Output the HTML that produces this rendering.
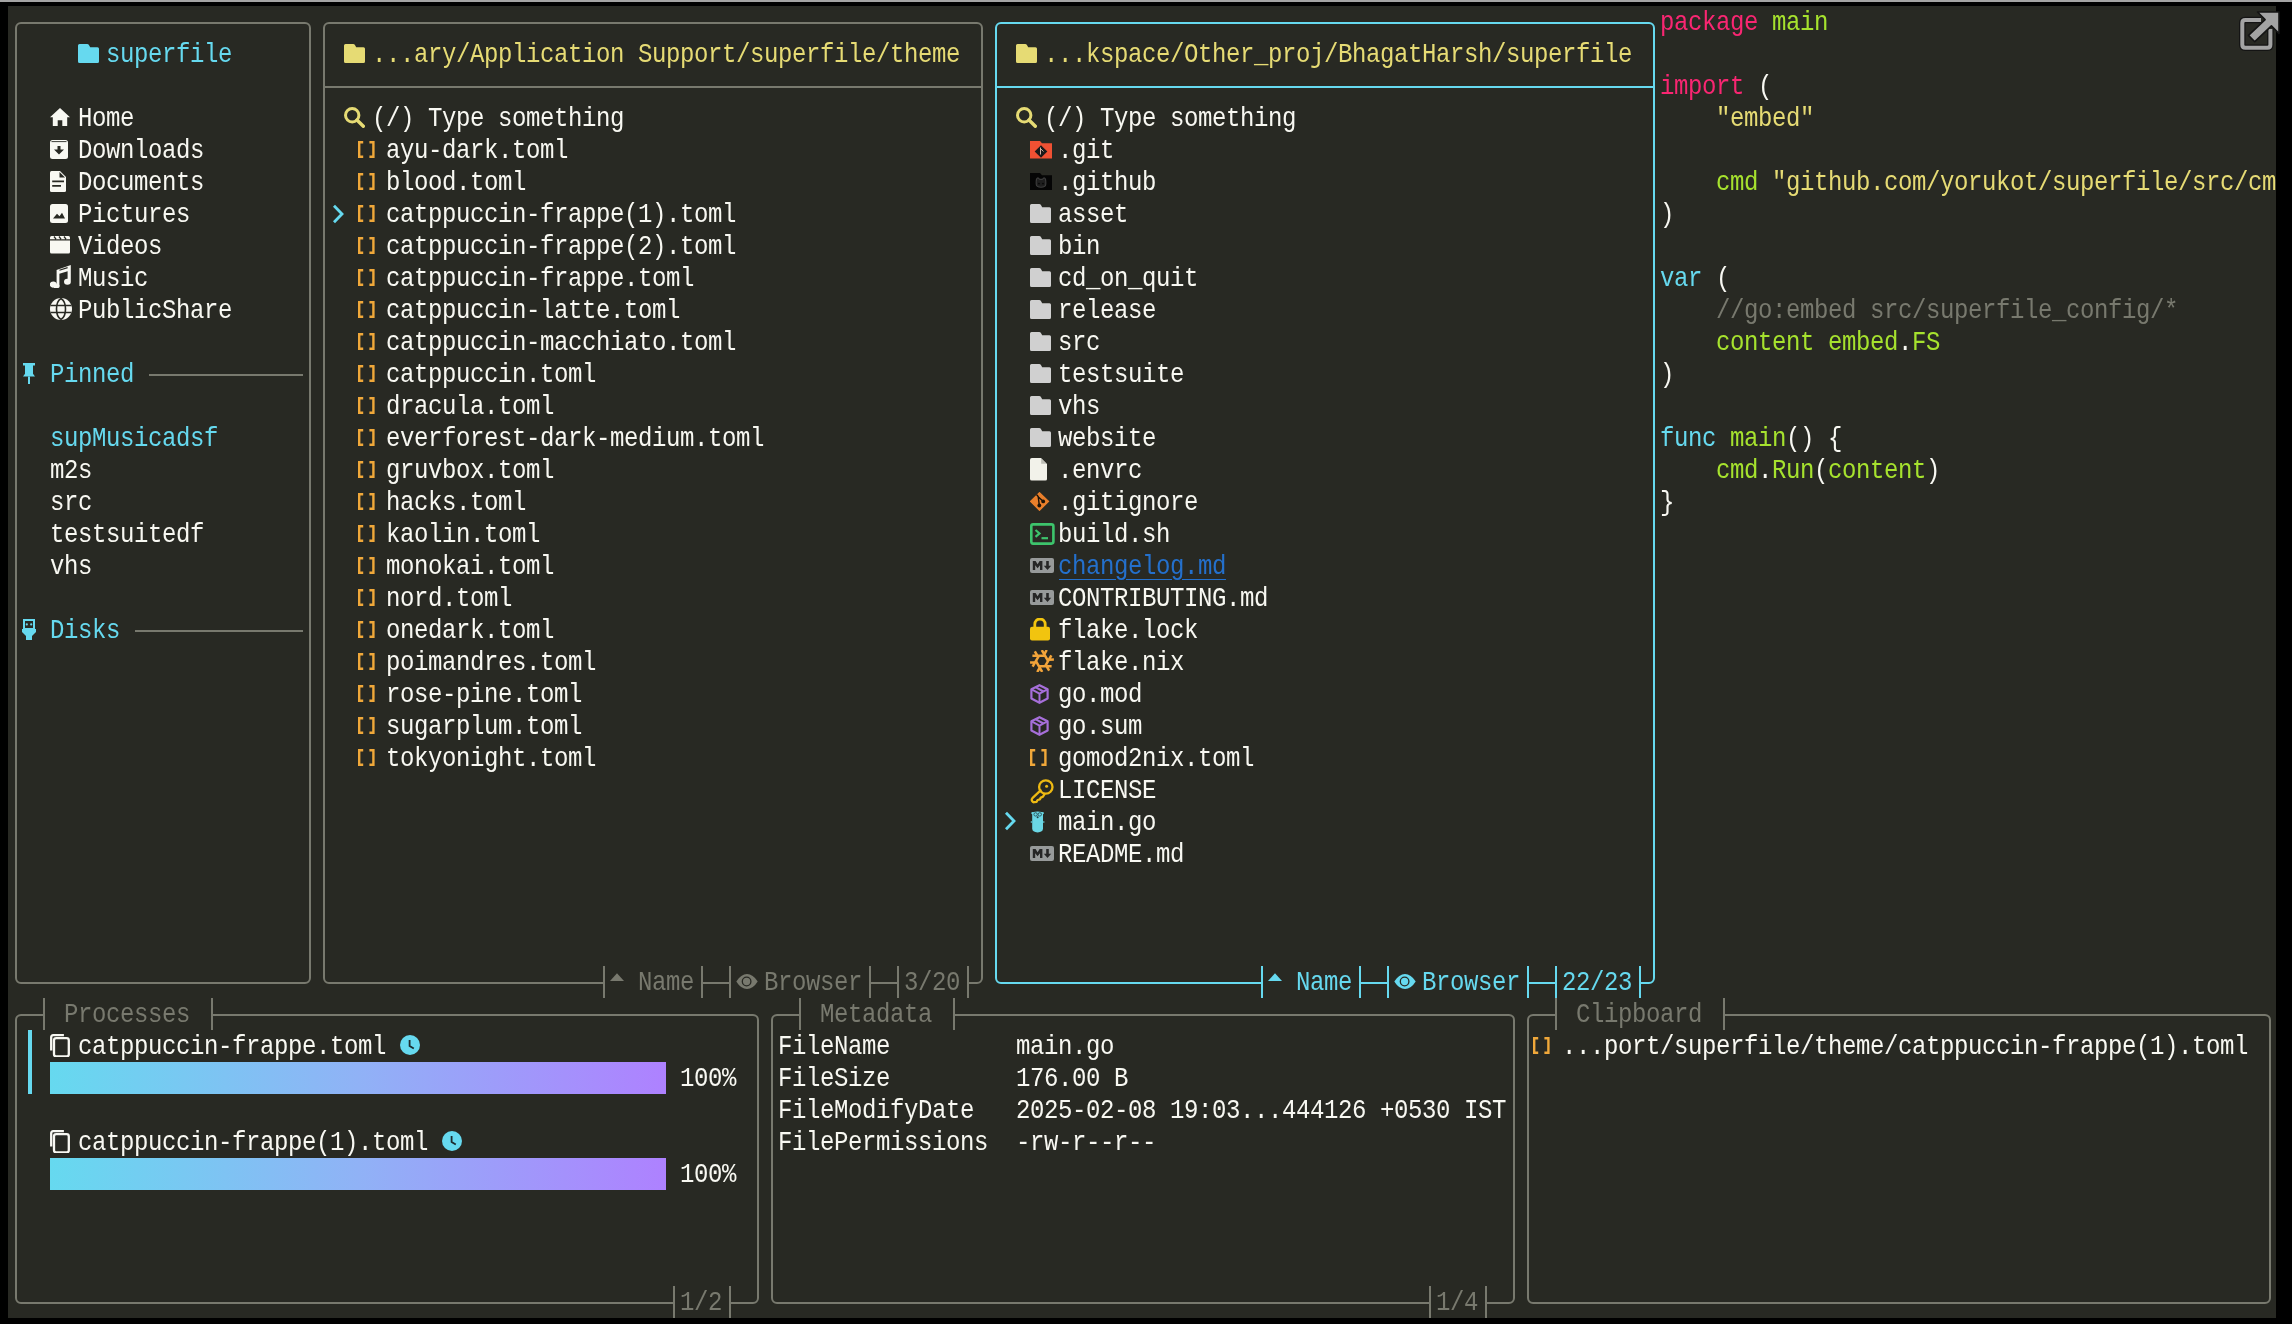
<!DOCTYPE html><html><head><meta charset="utf-8"><style>
html,body{margin:0;padding:0;}
body{width:2292px;height:1324px;background:#000;position:relative;overflow:hidden;}
body>div,body>span,body>svg{position:absolute;}
.t{font-family:"Liberation Mono",monospace;font-size:24px;letter-spacing:-0.400px;line-height:32px;white-space:pre;transform-origin:0 5.17px;transform:scaleY(1.12);will-change:transform;}
</style></head><body>
<div style="left:0px;top:0px;width:2292px;height:2px;background:#a4a4a4;"></div>
<div style="left:8px;top:6px;width:2268px;height:1312px;background:#282923;"></div>
<div style="left:15px;top:22px;width:292px;height:958px;border:2px solid #78796E;border-radius:6px;"></div>
<div style="left:323px;top:22px;width:656px;height:958px;border:2px solid #78796E;border-radius:6px;"></div>
<div style="left:323px;top:86px;width:660px;height:2px;background:#78796E;"></div>
<div style="left:995px;top:22px;width:656px;height:958px;border:2px solid #66D9EF;border-radius:6px;"></div>
<div style="left:995px;top:86px;width:660px;height:2px;background:#66D9EF;"></div>
<div style="left:15px;top:1014px;width:740px;height:286px;border:2px solid #78796E;border-radius:6px;"></div>
<div style="left:771px;top:1014px;width:740px;height:286px;border:2px solid #78796E;border-radius:6px;"></div>
<div style="left:1527px;top:1014px;width:740px;height:286px;border:2px solid #78796E;border-radius:6px;"></div>
<div style="left:45px;top:1013px;width:166px;height:4px;background:#282923;"></div>
<div style="left:43px;top:998px;width:2px;height:32px;background:#78796E;"></div>
<div style="left:37px;top:1014px;width:8px;height:2px;background:#78796E;"></div>
<div style="left:211px;top:998px;width:2px;height:32px;background:#78796E;"></div>
<div style="left:211px;top:1014px;width:8px;height:2px;background:#78796E;"></div>
<span class="t" style="left:64px;top:998px;color:#78796E;">Processes</span>
<div style="left:801px;top:1013px;width:152px;height:4px;background:#282923;"></div>
<div style="left:799px;top:998px;width:2px;height:32px;background:#78796E;"></div>
<div style="left:793px;top:1014px;width:8px;height:2px;background:#78796E;"></div>
<div style="left:953px;top:998px;width:2px;height:32px;background:#78796E;"></div>
<div style="left:953px;top:1014px;width:8px;height:2px;background:#78796E;"></div>
<span class="t" style="left:820px;top:998px;color:#78796E;">Metadata</span>
<div style="left:1557px;top:1013px;width:166px;height:4px;background:#282923;"></div>
<div style="left:1555px;top:998px;width:2px;height:32px;background:#78796E;"></div>
<div style="left:1549px;top:1014px;width:8px;height:2px;background:#78796E;"></div>
<div style="left:1723px;top:998px;width:2px;height:32px;background:#78796E;"></div>
<div style="left:1723px;top:1014px;width:8px;height:2px;background:#78796E;"></div>
<span class="t" style="left:1576px;top:998px;color:#78796E;">Clipboard</span>
<div style="left:675px;top:1301px;width:54px;height:4px;background:#282923;"></div>
<div style="left:673px;top:1286px;width:2px;height:32px;background:#78796E;"></div>
<div style="left:667px;top:1302px;width:8px;height:2px;background:#78796E;"></div>
<div style="left:729px;top:1286px;width:2px;height:32px;background:#78796E;"></div>
<div style="left:729px;top:1302px;width:8px;height:2px;background:#78796E;"></div>
<span class="t" style="left:680px;top:1286px;color:#78796E;">1/2</span>
<div style="left:1431px;top:1301px;width:54px;height:4px;background:#282923;"></div>
<div style="left:1429px;top:1286px;width:2px;height:32px;background:#78796E;"></div>
<div style="left:1423px;top:1302px;width:8px;height:2px;background:#78796E;"></div>
<div style="left:1485px;top:1286px;width:2px;height:32px;background:#78796E;"></div>
<div style="left:1485px;top:1302px;width:8px;height:2px;background:#78796E;"></div>
<span class="t" style="left:1436px;top:1286px;color:#78796E;">1/4</span>
<div style="left:605px;top:981px;width:96px;height:4px;background:#282923;"></div>
<div style="left:603px;top:966px;width:2px;height:32px;background:#78796E;"></div>
<div style="left:597px;top:982px;width:8px;height:2px;background:#78796E;"></div>
<div style="left:701px;top:966px;width:2px;height:32px;background:#78796E;"></div>
<div style="left:701px;top:982px;width:8px;height:2px;background:#78796E;"></div>
<div style="left:731px;top:981px;width:138px;height:4px;background:#282923;"></div>
<div style="left:729px;top:966px;width:2px;height:32px;background:#78796E;"></div>
<div style="left:723px;top:982px;width:8px;height:2px;background:#78796E;"></div>
<div style="left:869px;top:966px;width:2px;height:32px;background:#78796E;"></div>
<div style="left:869px;top:982px;width:8px;height:2px;background:#78796E;"></div>
<div style="left:899px;top:981px;width:68px;height:4px;background:#282923;"></div>
<div style="left:897px;top:966px;width:2px;height:32px;background:#78796E;"></div>
<div style="left:891px;top:982px;width:8px;height:2px;background:#78796E;"></div>
<div style="left:967px;top:966px;width:2px;height:32px;background:#78796E;"></div>
<div style="left:967px;top:982px;width:8px;height:2px;background:#78796E;"></div>
<span class="t" style="left:638px;top:966px;color:#78796E;">Name</span>
<span class="t" style="left:764px;top:966px;color:#78796E;">Browser</span>
<span class="t" style="left:904px;top:966px;color:#78796E;">3/20</span>
<div style="left:1263px;top:981px;width:96px;height:4px;background:#282923;"></div>
<div style="left:1261px;top:966px;width:2px;height:32px;background:#66D9EF;"></div>
<div style="left:1255px;top:982px;width:8px;height:2px;background:#66D9EF;"></div>
<div style="left:1359px;top:966px;width:2px;height:32px;background:#66D9EF;"></div>
<div style="left:1359px;top:982px;width:8px;height:2px;background:#66D9EF;"></div>
<div style="left:1389px;top:981px;width:138px;height:4px;background:#282923;"></div>
<div style="left:1387px;top:966px;width:2px;height:32px;background:#66D9EF;"></div>
<div style="left:1381px;top:982px;width:8px;height:2px;background:#66D9EF;"></div>
<div style="left:1527px;top:966px;width:2px;height:32px;background:#66D9EF;"></div>
<div style="left:1527px;top:982px;width:8px;height:2px;background:#66D9EF;"></div>
<div style="left:1557px;top:981px;width:82px;height:4px;background:#282923;"></div>
<div style="left:1555px;top:966px;width:2px;height:32px;background:#66D9EF;"></div>
<div style="left:1549px;top:982px;width:8px;height:2px;background:#66D9EF;"></div>
<div style="left:1639px;top:966px;width:2px;height:32px;background:#66D9EF;"></div>
<div style="left:1639px;top:982px;width:8px;height:2px;background:#66D9EF;"></div>
<span class="t" style="left:1296px;top:966px;color:#66D9EF;">Name</span>
<span class="t" style="left:1422px;top:966px;color:#66D9EF;">Browser</span>
<span class="t" style="left:1562px;top:966px;color:#66D9EF;">22/23</span>
<span class="t" style="left:106px;top:38px;color:#66D9EF;">superfile</span>
<span class="t" style="left:78px;top:102px;color:#F8F8F2;">Home</span>
<span class="t" style="left:78px;top:134px;color:#F8F8F2;">Downloads</span>
<span class="t" style="left:78px;top:166px;color:#F8F8F2;">Documents</span>
<span class="t" style="left:78px;top:198px;color:#F8F8F2;">Pictures</span>
<span class="t" style="left:78px;top:230px;color:#F8F8F2;">Videos</span>
<span class="t" style="left:78px;top:262px;color:#F8F8F2;">Music</span>
<span class="t" style="left:78px;top:294px;color:#F8F8F2;">PublicShare</span>
<span class="t" style="left:50px;top:358px;color:#66D9EF;">Pinned</span>
<div style="left:149px;top:374px;width:154px;height:2px;background:#78796E;"></div>
<span class="t" style="left:50px;top:422px;color:#66D9EF;">supMusicadsf</span>
<span class="t" style="left:50px;top:454px;color:#F8F8F2;">m2s</span>
<span class="t" style="left:50px;top:486px;color:#F8F8F2;">src</span>
<span class="t" style="left:50px;top:518px;color:#F8F8F2;">testsuitedf</span>
<span class="t" style="left:50px;top:550px;color:#F8F8F2;">vhs</span>
<span class="t" style="left:50px;top:614px;color:#66D9EF;">Disks</span>
<div style="left:135px;top:630px;width:168px;height:2px;background:#78796E;"></div>
<span class="t" style="left:372px;top:38px;color:#E6DB74;">...ary/Application Support/superfile/theme</span>
<span class="t" style="left:372px;top:102px;color:#F8F8F2;">(/) Type something</span>
<span class="t" style="left:386px;top:134px;color:#F8F8F2;">ayu-dark.toml</span>
<span class="t" style="left:386px;top:166px;color:#F8F8F2;">blood.toml</span>
<span class="t" style="left:386px;top:198px;color:#F8F8F2;">catppuccin-frappe(1).toml</span>
<span class="t" style="left:386px;top:230px;color:#F8F8F2;">catppuccin-frappe(2).toml</span>
<span class="t" style="left:386px;top:262px;color:#F8F8F2;">catppuccin-frappe.toml</span>
<span class="t" style="left:386px;top:294px;color:#F8F8F2;">catppuccin-latte.toml</span>
<span class="t" style="left:386px;top:326px;color:#F8F8F2;">catppuccin-macchiato.toml</span>
<span class="t" style="left:386px;top:358px;color:#F8F8F2;">catppuccin.toml</span>
<span class="t" style="left:386px;top:390px;color:#F8F8F2;">dracula.toml</span>
<span class="t" style="left:386px;top:422px;color:#F8F8F2;">everforest-dark-medium.toml</span>
<span class="t" style="left:386px;top:454px;color:#F8F8F2;">gruvbox.toml</span>
<span class="t" style="left:386px;top:486px;color:#F8F8F2;">hacks.toml</span>
<span class="t" style="left:386px;top:518px;color:#F8F8F2;">kaolin.toml</span>
<span class="t" style="left:386px;top:550px;color:#F8F8F2;">monokai.toml</span>
<span class="t" style="left:386px;top:582px;color:#F8F8F2;">nord.toml</span>
<span class="t" style="left:386px;top:614px;color:#F8F8F2;">onedark.toml</span>
<span class="t" style="left:386px;top:646px;color:#F8F8F2;">poimandres.toml</span>
<span class="t" style="left:386px;top:678px;color:#F8F8F2;">rose-pine.toml</span>
<span class="t" style="left:386px;top:710px;color:#F8F8F2;">sugarplum.toml</span>
<span class="t" style="left:386px;top:742px;color:#F8F8F2;">tokyonight.toml</span>
<span class="t" style="left:1044px;top:38px;color:#E6DB74;">...kspace/Other_proj/BhagatHarsh/superfile</span>
<span class="t" style="left:1044px;top:102px;color:#F8F8F2;">(/) Type something</span>
<span class="t" style="left:1058px;top:134px;color:#F8F8F2;">.git</span>
<span class="t" style="left:1058px;top:166px;color:#F8F8F2;">.github</span>
<span class="t" style="left:1058px;top:198px;color:#F8F8F2;">asset</span>
<span class="t" style="left:1058px;top:230px;color:#F8F8F2;">bin</span>
<span class="t" style="left:1058px;top:262px;color:#F8F8F2;">cd_on_quit</span>
<span class="t" style="left:1058px;top:294px;color:#F8F8F2;">release</span>
<span class="t" style="left:1058px;top:326px;color:#F8F8F2;">src</span>
<span class="t" style="left:1058px;top:358px;color:#F8F8F2;">testsuite</span>
<span class="t" style="left:1058px;top:390px;color:#F8F8F2;">vhs</span>
<span class="t" style="left:1058px;top:422px;color:#F8F8F2;">website</span>
<span class="t" style="left:1058px;top:454px;color:#F8F8F2;">.envrc</span>
<span class="t" style="left:1058px;top:486px;color:#F8F8F2;">.gitignore</span>
<span class="t" style="left:1058px;top:518px;color:#F8F8F2;">build.sh</span>
<span class="t" style="left:1058px;top:550px;color:#2470CC;">changelog.md</span>
<span class="t" style="left:1058px;top:582px;color:#F8F8F2;">CONTRIBUTING.md</span>
<span class="t" style="left:1058px;top:614px;color:#F8F8F2;">flake.lock</span>
<span class="t" style="left:1058px;top:646px;color:#F8F8F2;">flake.nix</span>
<span class="t" style="left:1058px;top:678px;color:#F8F8F2;">go.mod</span>
<span class="t" style="left:1058px;top:710px;color:#F8F8F2;">go.sum</span>
<span class="t" style="left:1058px;top:742px;color:#F8F8F2;">gomod2nix.toml</span>
<span class="t" style="left:1058px;top:774px;color:#F8F8F2;">LICENSE</span>
<span class="t" style="left:1058px;top:806px;color:#F8F8F2;">main.go</span>
<span class="t" style="left:1058px;top:838px;color:#F8F8F2;">README.md</span>
<span class="t" style="left:1660px;top:6px;color:#F92672;">package</span>
<span class="t" style="left:1772px;top:6px;color:#A6E22E;">main</span>
<span class="t" style="left:1660px;top:70px;color:#F92672;">import</span>
<span class="t" style="left:1758px;top:70px;color:#F8F8F2;">(</span>
<span class="t" style="left:1716px;top:102px;color:#E6DB74;">&quot;embed&quot;</span>
<span class="t" style="left:1716px;top:166px;color:#A6E22E;">cmd</span>
<span class="t" style="left:1772px;top:166px;color:#E6DB74;">&quot;github.com/yorukot/superfile/src/cm</span>
<span class="t" style="left:1660px;top:198px;color:#F8F8F2;">)</span>
<span class="t" style="left:1660px;top:262px;color:#66D9EF;">var</span>
<span class="t" style="left:1716px;top:262px;color:#F8F8F2;">(</span>
<span class="t" style="left:1716px;top:294px;color:#78796E;">//go:embed src/superfile_config/*</span>
<span class="t" style="left:1716px;top:326px;color:#A6E22E;">content</span>
<span class="t" style="left:1828px;top:326px;color:#A6E22E;">embed</span>
<span class="t" style="left:1898px;top:326px;color:#F8F8F2;">.</span>
<span class="t" style="left:1912px;top:326px;color:#A6E22E;">FS</span>
<span class="t" style="left:1660px;top:358px;color:#F8F8F2;">)</span>
<span class="t" style="left:1660px;top:422px;color:#66D9EF;">func</span>
<span class="t" style="left:1730px;top:422px;color:#A6E22E;">main</span>
<span class="t" style="left:1786px;top:422px;color:#F8F8F2;">()</span>
<span class="t" style="left:1828px;top:422px;color:#F8F8F2;">{</span>
<span class="t" style="left:1716px;top:454px;color:#A6E22E;">cmd</span>
<span class="t" style="left:1758px;top:454px;color:#F8F8F2;">.</span>
<span class="t" style="left:1772px;top:454px;color:#A6E22E;">Run</span>
<span class="t" style="left:1814px;top:454px;color:#F8F8F2;">(</span>
<span class="t" style="left:1828px;top:454px;color:#A6E22E;">content</span>
<span class="t" style="left:1926px;top:454px;color:#F8F8F2;">)</span>
<span class="t" style="left:1660px;top:486px;color:#F8F8F2;">}</span>
<span class="t" style="left:78px;top:1030px;color:#F8F8F2;">catppuccin-frappe.toml</span>
<span class="t" style="left:78px;top:1126px;color:#F8F8F2;">catppuccin-frappe(1).toml</span>
<div style="left:50px;top:1062px;width:616px;height:32px;background:linear-gradient(90deg,#66D9EF,#90B2F6 50%,#AE81FF);"></div>
<div style="left:50px;top:1158px;width:616px;height:32px;background:linear-gradient(90deg,#66D9EF,#90B2F6 50%,#AE81FF);"></div>
<span class="t" style="left:680px;top:1062px;color:#F8F8F2;">100%</span>
<span class="t" style="left:680px;top:1158px;color:#F8F8F2;">100%</span>
<div style="left:28px;top:1030px;width:4px;height:64px;background:#66D9EF;"></div>
<span class="t" style="left:778px;top:1030px;color:#F8F8F2;">FileName</span>
<span class="t" style="left:1016px;top:1030px;color:#F8F8F2;">main.go</span>
<span class="t" style="left:778px;top:1062px;color:#F8F8F2;">FileSize</span>
<span class="t" style="left:1016px;top:1062px;color:#F8F8F2;">176.00 B</span>
<span class="t" style="left:778px;top:1094px;color:#F8F8F2;">FileModifyDate</span>
<span class="t" style="left:1016px;top:1094px;color:#F8F8F2;">2025-02-08 19:03...444126 +0530 IST</span>
<span class="t" style="left:778px;top:1126px;color:#F8F8F2;">FilePermissions</span>
<span class="t" style="left:1016px;top:1126px;color:#F8F8F2;">-rw-r--r--</span>
<span class="t" style="left:1562px;top:1030px;color:#F8F8F2;">...port/superfile/theme/catppuccin-frappe(1).toml</span>
<svg style="left:78px;top:44px" width="21" height="19" viewBox="0 0 21 19"><path d="M0 1.5Q0 0 1.5 0H9.2Q10.2 0 10.8 0.8L12.2 3.3H19.5Q21 3.3 21 4.8V17.5Q21 19 19.5 19H1.5Q0 19 0 17.5Z" fill="#66D9EF" stroke="none" stroke-width="0" /></svg>
<svg style="left:50px;top:108px" width="20" height="18" viewBox="0 0 20 18"><path d="M10 0L20 9.2H17.2V18H12.3V12.3H7.7V18H2.8V9.2H0Z" fill="#F8F8F2" stroke="none" stroke-width="0" /></svg>
<svg style="left:50px;top:140px" width="18" height="19" viewBox="0 0 18 19"><path d="M2.5 0H15.5Q18 0 18 2.5V16.5Q18 19 15.5 19H2.5Q0 19 0 16.5V2.5Q0 0 2.5 0Z" fill="#F8F8F2" stroke="none" stroke-width="0" /><path d="M1.5 1.6H16.5" fill="none" stroke="#282923" stroke-width="0.9" /><path d="M7.5 6H10.5V9.5H14L9 14.5L4 9.5H7.5Z" fill="#282923" stroke="none" stroke-width="0" /></svg>
<svg style="left:50px;top:171px" width="16" height="21" viewBox="0 0 16 21"><path d="M1.5 0H10L16 6V19.5Q16 21 14.5 21H1.5Q0 21 0 19.5V1.5Q0 0 1.5 0Z" fill="#F8F8F2" stroke="none" stroke-width="0" /><path d="M9.5 1V6.5H15Z" fill="#282923" stroke="none" stroke-width="0" /><path d="M2.2 10.3H14M2.2 14.8H11" fill="none" stroke="#282923" stroke-width="1.8" /></svg>
<svg style="left:50px;top:204px" width="18" height="19" viewBox="0 0 18 19"><path d="M2.5 0H15.5Q18 0 18 2.5V16.5Q18 19 15.5 19H2.5Q0 19 0 16.5V2.5Q0 0 2.5 0Z" fill="#F8F8F2" stroke="none" stroke-width="0" /><path d="M3 14.5L7 9.8L9.5 12.2L12 8.8L15 14.5Z" fill="#282923" stroke="none" stroke-width="0" /></svg>
<svg style="left:50px;top:236px" width="20" height="18" viewBox="0 0 20 18"><path d="M1.5 0H18.5Q20 0 20 1.5V16Q20 17.5 18.5 17.5H1.5Q0 17.5 0 16V1.5Q0 0 1.5 0Z" fill="#F8F8F2" stroke="none" stroke-width="0" /><path d="M4 0.5L6 3.2M9 0.5L11 3.2M14 0.5L16 3.2M0 3.8H20" fill="none" stroke="#282923" stroke-width="1.3" /></svg>
<svg style="left:50px;top:264px" width="22" height="24" viewBox="0 0 22 24"><path d="M3.6 23.6A3.4 3 0 1 1 6.6 20.6V6L20.8 1V17.6A3.4 3 0 1 1 17.6 14.8V7.2L9.4 9.8V20.6A3.4 3 0 0 1 3.6 23.6Z" fill="#F8F8F2" stroke="none" stroke-width="0" /><path d="M9.4 6.2L17.6 3.6" fill="none" stroke="#282923" stroke-width="1.2" /></svg>
<svg style="left:50px;top:298px" width="22" height="22" viewBox="0 0 22 22"><circle cx="11" cy="11" r="11" fill="#F8F8F2"/><path d="M11 0.5C5 4 5 18 11 21.5M11 0.5C17 4 17 18 11 21.5M0.5 7.5H21.5M0.5 14.5H21.5" fill="none" stroke="#282923" stroke-width="1.6" /></svg>
<svg style="left:23px;top:363px" width="12" height="21" viewBox="0 0 12 21"><path d="M0 0H12V2.5H10V10.8L12 13.5H0L2 10.8V2.5H0Z" fill="#66D9EF" stroke="none" stroke-width="0" /><path d="M5 13.5H7V21H5Z" fill="#66D9EF" stroke="none" stroke-width="0" /></svg>
<svg style="left:22px;top:619px" width="14" height="21" viewBox="0 0 14 21"><path d="M2 1H12V10H2Z" fill="none" stroke="#66D9EF" stroke-width="2" /><circle cx="4.8" cy="5.4" r="1.1" fill="#66D9EF"/><circle cx="9.2" cy="5.4" r="1.1" fill="#66D9EF"/><path d="M0 10H14V13L10 17V21H4V17L0 13Z" fill="#66D9EF" stroke="none" stroke-width="0" /></svg>
<svg style="left:344px;top:44px" width="21" height="19" viewBox="0 0 21 19"><path d="M0 1.5Q0 0 1.5 0H9.2Q10.2 0 10.8 0.8L12.2 3.3H19.5Q21 3.3 21 4.8V17.5Q21 19 19.5 19H1.5Q0 19 0 17.5Z" fill="#E6DB74" stroke="none" stroke-width="0" /></svg>
<svg style="left:344px;top:107px" width="21" height="21" viewBox="0 0 21 21"><circle cx="8.2" cy="8.2" r="6.7" fill="none" stroke="#E6DB74" stroke-width="3"/><path d="M13 13L19.3 19.3" fill="none" stroke="#E6DB74" stroke-width="3.4" stroke-linecap="round"/></svg>
<svg style="left:1016px;top:44px" width="21" height="19" viewBox="0 0 21 19"><path d="M0 1.5Q0 0 1.5 0H9.2Q10.2 0 10.8 0.8L12.2 3.3H19.5Q21 3.3 21 4.8V17.5Q21 19 19.5 19H1.5Q0 19 0 17.5Z" fill="#E6DB74" stroke="none" stroke-width="0" /></svg>
<svg style="left:1016px;top:107px" width="21" height="21" viewBox="0 0 21 21"><circle cx="8.2" cy="8.2" r="6.7" fill="none" stroke="#E6DB74" stroke-width="3"/><path d="M13 13L19.3 19.3" fill="none" stroke="#E6DB74" stroke-width="3.4" stroke-linecap="round"/></svg>
<svg style="left:331.5px;top:203.5px" width="12" height="20" viewBox="0 0 12 20"><path d="M2 1.8L10 10L2 18.2" fill="none" stroke="#66D9EF" stroke-width="2.8" stroke-linejoin="miter"/></svg>
<svg style="left:1003.5px;top:811px" width="12" height="20" viewBox="0 0 12 20"><path d="M2 1.8L10 10L2 18.2" fill="none" stroke="#66D9EF" stroke-width="2.8" stroke-linejoin="miter"/></svg>
<svg style="left:357.8px;top:141px" width="17" height="17" viewBox="0 0 17 17"><path d="M0 0H5.2V2.4H2.4V14.6H5.2V17H0Z" fill="#F0A83A" stroke="none" stroke-width="0" /><path d="M16.6 0H11.4V2.4H14.2V14.6H11.4V17H16.6Z" fill="#F0A83A" stroke="none" stroke-width="0" /></svg>
<svg style="left:357.8px;top:173px" width="17" height="17" viewBox="0 0 17 17"><path d="M0 0H5.2V2.4H2.4V14.6H5.2V17H0Z" fill="#F0A83A" stroke="none" stroke-width="0" /><path d="M16.6 0H11.4V2.4H14.2V14.6H11.4V17H16.6Z" fill="#F0A83A" stroke="none" stroke-width="0" /></svg>
<svg style="left:357.8px;top:205px" width="17" height="17" viewBox="0 0 17 17"><path d="M0 0H5.2V2.4H2.4V14.6H5.2V17H0Z" fill="#F0A83A" stroke="none" stroke-width="0" /><path d="M16.6 0H11.4V2.4H14.2V14.6H11.4V17H16.6Z" fill="#F0A83A" stroke="none" stroke-width="0" /></svg>
<svg style="left:357.8px;top:237px" width="17" height="17" viewBox="0 0 17 17"><path d="M0 0H5.2V2.4H2.4V14.6H5.2V17H0Z" fill="#F0A83A" stroke="none" stroke-width="0" /><path d="M16.6 0H11.4V2.4H14.2V14.6H11.4V17H16.6Z" fill="#F0A83A" stroke="none" stroke-width="0" /></svg>
<svg style="left:357.8px;top:269px" width="17" height="17" viewBox="0 0 17 17"><path d="M0 0H5.2V2.4H2.4V14.6H5.2V17H0Z" fill="#F0A83A" stroke="none" stroke-width="0" /><path d="M16.6 0H11.4V2.4H14.2V14.6H11.4V17H16.6Z" fill="#F0A83A" stroke="none" stroke-width="0" /></svg>
<svg style="left:357.8px;top:301px" width="17" height="17" viewBox="0 0 17 17"><path d="M0 0H5.2V2.4H2.4V14.6H5.2V17H0Z" fill="#F0A83A" stroke="none" stroke-width="0" /><path d="M16.6 0H11.4V2.4H14.2V14.6H11.4V17H16.6Z" fill="#F0A83A" stroke="none" stroke-width="0" /></svg>
<svg style="left:357.8px;top:333px" width="17" height="17" viewBox="0 0 17 17"><path d="M0 0H5.2V2.4H2.4V14.6H5.2V17H0Z" fill="#F0A83A" stroke="none" stroke-width="0" /><path d="M16.6 0H11.4V2.4H14.2V14.6H11.4V17H16.6Z" fill="#F0A83A" stroke="none" stroke-width="0" /></svg>
<svg style="left:357.8px;top:365px" width="17" height="17" viewBox="0 0 17 17"><path d="M0 0H5.2V2.4H2.4V14.6H5.2V17H0Z" fill="#F0A83A" stroke="none" stroke-width="0" /><path d="M16.6 0H11.4V2.4H14.2V14.6H11.4V17H16.6Z" fill="#F0A83A" stroke="none" stroke-width="0" /></svg>
<svg style="left:357.8px;top:397px" width="17" height="17" viewBox="0 0 17 17"><path d="M0 0H5.2V2.4H2.4V14.6H5.2V17H0Z" fill="#F0A83A" stroke="none" stroke-width="0" /><path d="M16.6 0H11.4V2.4H14.2V14.6H11.4V17H16.6Z" fill="#F0A83A" stroke="none" stroke-width="0" /></svg>
<svg style="left:357.8px;top:429px" width="17" height="17" viewBox="0 0 17 17"><path d="M0 0H5.2V2.4H2.4V14.6H5.2V17H0Z" fill="#F0A83A" stroke="none" stroke-width="0" /><path d="M16.6 0H11.4V2.4H14.2V14.6H11.4V17H16.6Z" fill="#F0A83A" stroke="none" stroke-width="0" /></svg>
<svg style="left:357.8px;top:461px" width="17" height="17" viewBox="0 0 17 17"><path d="M0 0H5.2V2.4H2.4V14.6H5.2V17H0Z" fill="#F0A83A" stroke="none" stroke-width="0" /><path d="M16.6 0H11.4V2.4H14.2V14.6H11.4V17H16.6Z" fill="#F0A83A" stroke="none" stroke-width="0" /></svg>
<svg style="left:357.8px;top:493px" width="17" height="17" viewBox="0 0 17 17"><path d="M0 0H5.2V2.4H2.4V14.6H5.2V17H0Z" fill="#F0A83A" stroke="none" stroke-width="0" /><path d="M16.6 0H11.4V2.4H14.2V14.6H11.4V17H16.6Z" fill="#F0A83A" stroke="none" stroke-width="0" /></svg>
<svg style="left:357.8px;top:525px" width="17" height="17" viewBox="0 0 17 17"><path d="M0 0H5.2V2.4H2.4V14.6H5.2V17H0Z" fill="#F0A83A" stroke="none" stroke-width="0" /><path d="M16.6 0H11.4V2.4H14.2V14.6H11.4V17H16.6Z" fill="#F0A83A" stroke="none" stroke-width="0" /></svg>
<svg style="left:357.8px;top:557px" width="17" height="17" viewBox="0 0 17 17"><path d="M0 0H5.2V2.4H2.4V14.6H5.2V17H0Z" fill="#F0A83A" stroke="none" stroke-width="0" /><path d="M16.6 0H11.4V2.4H14.2V14.6H11.4V17H16.6Z" fill="#F0A83A" stroke="none" stroke-width="0" /></svg>
<svg style="left:357.8px;top:589px" width="17" height="17" viewBox="0 0 17 17"><path d="M0 0H5.2V2.4H2.4V14.6H5.2V17H0Z" fill="#F0A83A" stroke="none" stroke-width="0" /><path d="M16.6 0H11.4V2.4H14.2V14.6H11.4V17H16.6Z" fill="#F0A83A" stroke="none" stroke-width="0" /></svg>
<svg style="left:357.8px;top:621px" width="17" height="17" viewBox="0 0 17 17"><path d="M0 0H5.2V2.4H2.4V14.6H5.2V17H0Z" fill="#F0A83A" stroke="none" stroke-width="0" /><path d="M16.6 0H11.4V2.4H14.2V14.6H11.4V17H16.6Z" fill="#F0A83A" stroke="none" stroke-width="0" /></svg>
<svg style="left:357.8px;top:653px" width="17" height="17" viewBox="0 0 17 17"><path d="M0 0H5.2V2.4H2.4V14.6H5.2V17H0Z" fill="#F0A83A" stroke="none" stroke-width="0" /><path d="M16.6 0H11.4V2.4H14.2V14.6H11.4V17H16.6Z" fill="#F0A83A" stroke="none" stroke-width="0" /></svg>
<svg style="left:357.8px;top:685px" width="17" height="17" viewBox="0 0 17 17"><path d="M0 0H5.2V2.4H2.4V14.6H5.2V17H0Z" fill="#F0A83A" stroke="none" stroke-width="0" /><path d="M16.6 0H11.4V2.4H14.2V14.6H11.4V17H16.6Z" fill="#F0A83A" stroke="none" stroke-width="0" /></svg>
<svg style="left:357.8px;top:717px" width="17" height="17" viewBox="0 0 17 17"><path d="M0 0H5.2V2.4H2.4V14.6H5.2V17H0Z" fill="#F0A83A" stroke="none" stroke-width="0" /><path d="M16.6 0H11.4V2.4H14.2V14.6H11.4V17H16.6Z" fill="#F0A83A" stroke="none" stroke-width="0" /></svg>
<svg style="left:357.8px;top:749px" width="17" height="17" viewBox="0 0 17 17"><path d="M0 0H5.2V2.4H2.4V14.6H5.2V17H0Z" fill="#F0A83A" stroke="none" stroke-width="0" /><path d="M16.6 0H11.4V2.4H14.2V14.6H11.4V17H16.6Z" fill="#F0A83A" stroke="none" stroke-width="0" /></svg>
<svg style="left:1532.8px;top:1037px" width="17" height="17" viewBox="0 0 17 17"><path d="M0 0H5.2V2.4H2.4V14.6H5.2V17H0Z" fill="#F0A83A" stroke="none" stroke-width="0" /><path d="M16.6 0H11.4V2.4H14.2V14.6H11.4V17H16.6Z" fill="#F0A83A" stroke="none" stroke-width="0" /></svg>
<svg style="left:1030px;top:140.6px" width="22" height="18" viewBox="0 0 22 18"><path d="M0 0H10L12 2.2H22V17.4H0Z" fill="#F05133" stroke="none" stroke-width="0" /><path d="M11 4.2L17.3 10.5L11 16.8L4.7 10.5Z" fill="#1a1a1a" stroke="none" stroke-width="0" /><path d="M10.5 6.5V13.5M10.5 7.6L13.5 10.5" fill="none" stroke="#e9c3b5" stroke-width="0.9" /></svg>
<svg style="left:1030px;top:172.8px" width="22" height="17" viewBox="0 0 22 17"><path d="M0 0H10L12 2.2H22V17H0Z" fill="#050505" stroke="none" stroke-width="0" /><path d="M6.2 8.5Q6.2 5.2 8 4.8L9.8 6.4H12.2L14 4.8Q15.8 5.2 15.8 8.5V11Q15.8 14.2 11 14.2Q6.2 14.2 6.2 11Z" fill="#1e1e1e" stroke="#3c3c3c" stroke-width="1.1" /><circle cx="9" cy="10.6" r="0.9" fill="#050505"/><circle cx="13" cy="10.6" r="0.9" fill="#050505"/></svg>
<svg style="left:1030px;top:204px" width="21" height="19" viewBox="0 0 21 19"><path d="M0 1.5Q0 0 1.5 0H9.2Q10.2 0 10.8 0.8L12.2 3.3H19.5Q21 3.3 21 4.8V17.5Q21 19 19.5 19H1.5Q0 19 0 17.5Z" fill="#D0D0D0" stroke="none" stroke-width="0" /></svg>
<svg style="left:1030px;top:236px" width="21" height="19" viewBox="0 0 21 19"><path d="M0 1.5Q0 0 1.5 0H9.2Q10.2 0 10.8 0.8L12.2 3.3H19.5Q21 3.3 21 4.8V17.5Q21 19 19.5 19H1.5Q0 19 0 17.5Z" fill="#D0D0D0" stroke="none" stroke-width="0" /></svg>
<svg style="left:1030px;top:268px" width="21" height="19" viewBox="0 0 21 19"><path d="M0 1.5Q0 0 1.5 0H9.2Q10.2 0 10.8 0.8L12.2 3.3H19.5Q21 3.3 21 4.8V17.5Q21 19 19.5 19H1.5Q0 19 0 17.5Z" fill="#D0D0D0" stroke="none" stroke-width="0" /></svg>
<svg style="left:1030px;top:300px" width="21" height="19" viewBox="0 0 21 19"><path d="M0 1.5Q0 0 1.5 0H9.2Q10.2 0 10.8 0.8L12.2 3.3H19.5Q21 3.3 21 4.8V17.5Q21 19 19.5 19H1.5Q0 19 0 17.5Z" fill="#D0D0D0" stroke="none" stroke-width="0" /></svg>
<svg style="left:1030px;top:332px" width="21" height="19" viewBox="0 0 21 19"><path d="M0 1.5Q0 0 1.5 0H9.2Q10.2 0 10.8 0.8L12.2 3.3H19.5Q21 3.3 21 4.8V17.5Q21 19 19.5 19H1.5Q0 19 0 17.5Z" fill="#D0D0D0" stroke="none" stroke-width="0" /></svg>
<svg style="left:1030px;top:364px" width="21" height="19" viewBox="0 0 21 19"><path d="M0 1.5Q0 0 1.5 0H9.2Q10.2 0 10.8 0.8L12.2 3.3H19.5Q21 3.3 21 4.8V17.5Q21 19 19.5 19H1.5Q0 19 0 17.5Z" fill="#D0D0D0" stroke="none" stroke-width="0" /></svg>
<svg style="left:1030px;top:396px" width="21" height="19" viewBox="0 0 21 19"><path d="M0 1.5Q0 0 1.5 0H9.2Q10.2 0 10.8 0.8L12.2 3.3H19.5Q21 3.3 21 4.8V17.5Q21 19 19.5 19H1.5Q0 19 0 17.5Z" fill="#D0D0D0" stroke="none" stroke-width="0" /></svg>
<svg style="left:1030px;top:428px" width="21" height="19" viewBox="0 0 21 19"><path d="M0 1.5Q0 0 1.5 0H9.2Q10.2 0 10.8 0.8L12.2 3.3H19.5Q21 3.3 21 4.8V17.5Q21 19 19.5 19H1.5Q0 19 0 17.5Z" fill="#D0D0D0" stroke="none" stroke-width="0" /></svg>
<svg style="left:1030px;top:458px" width="17" height="23" viewBox="0 0 17 23"><path d="M1.8 0H11L17 6V21Q17 22.6 15.4 22.6H1.8Q0 22.6 0 21V1.8Q0 0 1.8 0Z" fill="#F2F2EA" stroke="none" stroke-width="0" /><path d="M11.2 0.6V5.8H16.4Z" fill="#BDBDB5" stroke="none" stroke-width="0" /></svg>
<svg style="left:1030px;top:492px" width="20" height="19" viewBox="0 0 20 19"><path d="M9.5 0.6L18.6 9.4L9.5 18.3L0.5 9.4Z" fill="#E97F2B" stroke="#E97F2B" stroke-width="1.2" stroke-linejoin="round"/><path d="M6.9 3.0L8.2 4.6L9.3 13.4M8.4 5.0L13.1 9.3" fill="none" stroke="#1a1208" stroke-width="1.4" stroke-linecap="round"/><circle cx="9.3" cy="13.5" r="1.9" fill="#1a1208"/><circle cx="13.2" cy="9.4" r="1.9" fill="#1a1208"/></svg>
<svg style="left:1030px;top:523px" width="25" height="22" viewBox="0 0 25 22"><path d="M3 1.4H21.4Q23.4 1.4 23.4 3.4V18.6Q23.4 20.6 21.4 20.6H3Q1.3 20.6 1.3 18.6V3.4Q1.3 1.4 3 1.4Z" fill="none" stroke="#3DC46C" stroke-width="2.6" /><path d="M5.5 7L9.5 10.4L5.5 13.8" fill="none" stroke="#3DC46C" stroke-width="2.2" /><path d="M11.5 15.2H18" fill="none" stroke="#3DC46C" stroke-width="2.2" /></svg>
<svg style="left:1030px;top:558px" width="24" height="15" viewBox="0 0 24 15"><path d="M2 0H22Q24 0 24 2V13Q24 15 22 15H2Q0 15 0 13V2Q0 0 2 0Z" fill="#979A9A" stroke="none" stroke-width="0" /><path d="M2.8 12V3H5.6L7.6 6.2L9.6 3H12.4V12H10V7.2L7.6 10.2L5.2 7.2V12Z" fill="#262626" stroke="none" stroke-width="0" /><path d="M16.2 3H18.8V7.8H21.2L17.5 12L13.8 7.8H16.2Z" fill="#262626" stroke="none" stroke-width="0" /></svg>
<svg style="left:1030px;top:590px" width="24" height="15" viewBox="0 0 24 15"><path d="M2 0H22Q24 0 24 2V13Q24 15 22 15H2Q0 15 0 13V2Q0 0 2 0Z" fill="#979A9A" stroke="none" stroke-width="0" /><path d="M2.8 12V3H5.6L7.6 6.2L9.6 3H12.4V12H10V7.2L7.6 10.2L5.2 7.2V12Z" fill="#262626" stroke="none" stroke-width="0" /><path d="M16.2 3H18.8V7.8H21.2L17.5 12L13.8 7.8H16.2Z" fill="#262626" stroke="none" stroke-width="0" /></svg>
<svg style="left:1030px;top:846px" width="24" height="15" viewBox="0 0 24 15"><path d="M2 0H22Q24 0 24 2V13Q24 15 22 15H2Q0 15 0 13V2Q0 0 2 0Z" fill="#979A9A" stroke="none" stroke-width="0" /><path d="M2.8 12V3H5.6L7.6 6.2L9.6 3H12.4V12H10V7.2L7.6 10.2L5.2 7.2V12Z" fill="#262626" stroke="none" stroke-width="0" /><path d="M16.2 3H18.8V7.8H21.2L17.5 12L13.8 7.8H16.2Z" fill="#262626" stroke="none" stroke-width="0" /></svg>
<svg style="left:1030px;top:618px" width="20" height="23" viewBox="0 0 20 23"><path d="M4.8 9V6.2A5.2 5.2 0 0 1 15.2 6.2V9" fill="none" stroke="#F1C40F" stroke-width="2.8" /><path d="M2 8.8H18Q20 8.8 20 10.8V20.6Q20 22.6 18 22.6H2Q0 22.6 0 20.6V10.8Q0 8.8 2 8.8Z" fill="#F1C40F" stroke="none" stroke-width="0" /></svg>
<svg style="left:1030px;top:650.3px" width="24" height="22" viewBox="0 0 24 22"><g transform="translate(12 11)"><g transform="rotate(0)"><path d="M-9.6 -5.3H3.2M-7.2 -9.6L-4.6 -5.3" fill="none" stroke="#F2A43A" stroke-width="2.5" stroke-linecap="butt"/></g><g transform="rotate(60)"><path d="M-9.6 -5.3H3.2M-7.2 -9.6L-4.6 -5.3" fill="none" stroke="#F2A43A" stroke-width="2.5" stroke-linecap="butt"/></g><g transform="rotate(120)"><path d="M-9.6 -5.3H3.2M-7.2 -9.6L-4.6 -5.3" fill="none" stroke="#F2A43A" stroke-width="2.5" stroke-linecap="butt"/></g><g transform="rotate(180)"><path d="M-9.6 -5.3H3.2M-7.2 -9.6L-4.6 -5.3" fill="none" stroke="#F2A43A" stroke-width="2.5" stroke-linecap="butt"/></g><g transform="rotate(240)"><path d="M-9.6 -5.3H3.2M-7.2 -9.6L-4.6 -5.3" fill="none" stroke="#F2A43A" stroke-width="2.5" stroke-linecap="butt"/></g><g transform="rotate(300)"><path d="M-9.6 -5.3H3.2M-7.2 -9.6L-4.6 -5.3" fill="none" stroke="#F2A43A" stroke-width="2.5" stroke-linecap="butt"/></g></g></svg>
<svg style="left:1030px;top:683.5px" width="19" height="20" viewBox="0 0 19 20"><path d="M9.5 1.2L17.6 5.3V14.6L9.5 18.8L1.4 14.6V5.3Z" fill="none" stroke="#A66FD9" stroke-width="2.2" stroke-linejoin="round"/><path d="M1.6 5.4L9.5 9.6L17.4 5.4M9.5 9.6V18.6M5.4 3.2L13.4 7.5" fill="none" stroke="#A66FD9" stroke-width="2" /></svg>
<svg style="left:1030px;top:715.5px" width="19" height="20" viewBox="0 0 19 20"><path d="M9.5 1.2L17.6 5.3V14.6L9.5 18.8L1.4 14.6V5.3Z" fill="none" stroke="#A66FD9" stroke-width="2.2" stroke-linejoin="round"/><path d="M1.6 5.4L9.5 9.6L17.4 5.4M9.5 9.6V18.6M5.4 3.2L13.4 7.5" fill="none" stroke="#A66FD9" stroke-width="2" /></svg>
<svg style="left:1030px;top:749px" width="17" height="17" viewBox="0 0 17 17"><path d="M0 0H5.2V2.4H2.4V14.6H5.2V17H0Z" fill="#F0A83A" stroke="none" stroke-width="0" /><path d="M16.6 0H11.4V2.4H14.2V14.6H11.4V17H16.6Z" fill="#F0A83A" stroke="none" stroke-width="0" /></svg>
<svg style="left:1030px;top:777px" width="24" height="27" viewBox="0 0 24 27"><circle cx="15.8" cy="10" r="6.7" fill="none" stroke="#EEBA13" stroke-width="2.3"/><circle cx="16.6" cy="9.3" r="1.5" fill="#EEBA13"/><path d="M10.6 13.4L2.4 21.2Q1.4 22.2 1.8 23.4L2.4 24.4Q3 25.4 4.2 25.2L6.6 24.8L7.6 23L9.8 22.4L10.8 20.6L12.8 19.8L14.4 17.4" fill="none" stroke="#EEBA13" stroke-width="2.3" stroke-linejoin="round" stroke-linecap="round"/></svg>
<svg style="left:1030px;top:810.6px" width="16" height="22" viewBox="0 0 16 22"><path d="M2.2 2.6Q2.2 0.4 7.6 0.4Q13 0.4 13 2.6V17.6Q13 21.4 7.6 21.4Q2.2 21.4 2.2 17.6Z" fill="#6AD7E5" stroke="none" stroke-width="0" /><circle cx="2.4" cy="2.2" r="1.1" fill="#6AD7E5"/><circle cx="12.8" cy="2.2" r="1.1" fill="#6AD7E5"/><circle cx="1.4" cy="11" r="0.8" fill="#6AD7E5"/><circle cx="13.8" cy="11" r="0.8" fill="#6AD7E5"/><circle cx="5.6" cy="3.4" r="1.7" fill="none" stroke="#21454b" stroke-width="0.8"/><circle cx="9.8" cy="3.4" r="1.7" fill="none" stroke="#21454b" stroke-width="0.8"/><circle cx="7.6" cy="6.2" r="1" fill="#21454b"/></svg>
<svg style="left:610px;top:973px" width="14" height="8" viewBox="0 0 14 8"><path d="M7 0.2L14 8H0Z" fill="#78796E" stroke="none" stroke-width="0" /></svg>
<svg style="left:736px;top:974px" width="22" height="15" viewBox="0 0 22 15"><path d="M0.3 7.5Q5 0 11 0Q17 0 21.7 7.5Q17 15 11 15Q5 15 0.3 7.5Z" fill="#78796E" stroke="none" stroke-width="0" /><circle cx="10.6" cy="7.5" r="4.3" fill="none" stroke="#282923" stroke-width="1.3"/></svg>
<svg style="left:1268px;top:973px" width="14" height="8" viewBox="0 0 14 8"><path d="M7 0.2L14 8H0Z" fill="#66D9EF" stroke="none" stroke-width="0" /></svg>
<svg style="left:1394px;top:974px" width="22" height="15" viewBox="0 0 22 15"><path d="M0.3 7.5Q5 0 11 0Q17 0 21.7 7.5Q17 15 11 15Q5 15 0.3 7.5Z" fill="#66D9EF" stroke="none" stroke-width="0" /><circle cx="10.6" cy="7.5" r="4.3" fill="none" stroke="#282923" stroke-width="1.3"/></svg>
<svg style="left:50px;top:1034px" width="20" height="23" viewBox="0 0 20 23"><path d="M1.2 16.5V3.2Q1.2 1.2 3.2 1.2H13.9" fill="none" stroke="#F8F8F2" stroke-width="2.3" /><path d="M6.2 4.2H16.6Q18.8 4.2 18.8 6.4V20.2Q18.8 22.4 16.6 22.4H6.2Q4 22.4 4 20.2V6.4Q4 4.2 6.2 4.2Z" fill="none" stroke="#F8F8F2" stroke-width="2.3" /></svg>
<svg style="left:50px;top:1130px" width="20" height="23" viewBox="0 0 20 23"><path d="M1.2 16.5V3.2Q1.2 1.2 3.2 1.2H13.9" fill="none" stroke="#F8F8F2" stroke-width="2.3" /><path d="M6.2 4.2H16.6Q18.8 4.2 18.8 6.4V20.2Q18.8 22.4 16.6 22.4H6.2Q4 22.4 4 20.2V6.4Q4 4.2 6.2 4.2Z" fill="none" stroke="#F8F8F2" stroke-width="2.3" /></svg>
<svg style="left:400px;top:1035px" width="20" height="20" viewBox="0 0 20 20"><circle cx="10" cy="10" r="10" fill="#66D9EF"/><path d="M9.6 5V10.9L13.8 13.4" fill="none" stroke="#1d2b2e" stroke-width="1.8" /></svg>
<svg style="left:442px;top:1131px" width="20" height="20" viewBox="0 0 20 20"><circle cx="10" cy="10" r="10" fill="#66D9EF"/><path d="M9.6 5V10.9L13.8 13.4" fill="none" stroke="#1d2b2e" stroke-width="1.8" /></svg>
<div style="left:1059px;top:578.5px;width:57px;height:1.6px;background:#2470CC;"></div>
<div style="left:1126px;top:578.5px;width:46px;height:1.6px;background:#2470CC;"></div>
<div style="left:1182px;top:578.5px;width:44px;height:1.6px;background:#2470CC;"></div>
<div style="left:2276px;top:2px;width:16px;height:1322px;background:#000;"></div>
<svg style="left:2236px;top:10px" width="46" height="44" viewBox="0 0 46 44"><path d="M25 10.1H9.3Q6.3 10.1 6.3 13.1V34.8Q6.3 37.8 9.3 37.8H31.4Q34.4 37.8 34.4 34.8V19" fill="none" stroke="#141414" stroke-width="6.5" /><path d="M25 10.1H9.3Q6.3 10.1 6.3 13.1V34.8Q6.3 37.8 9.3 37.8H31.4Q34.4 37.8 34.4 34.8V19" fill="none" stroke="#A3A3A3" stroke-width="4" /><path d="M21.5 2H43V23.5L35.4 15.9L18.8 31.7L12.5 25.4L29.1 9.6Z" fill="#A3A3A3" stroke="#141414" stroke-width="1.6" stroke-linejoin="round"/></svg>
</body></html>
